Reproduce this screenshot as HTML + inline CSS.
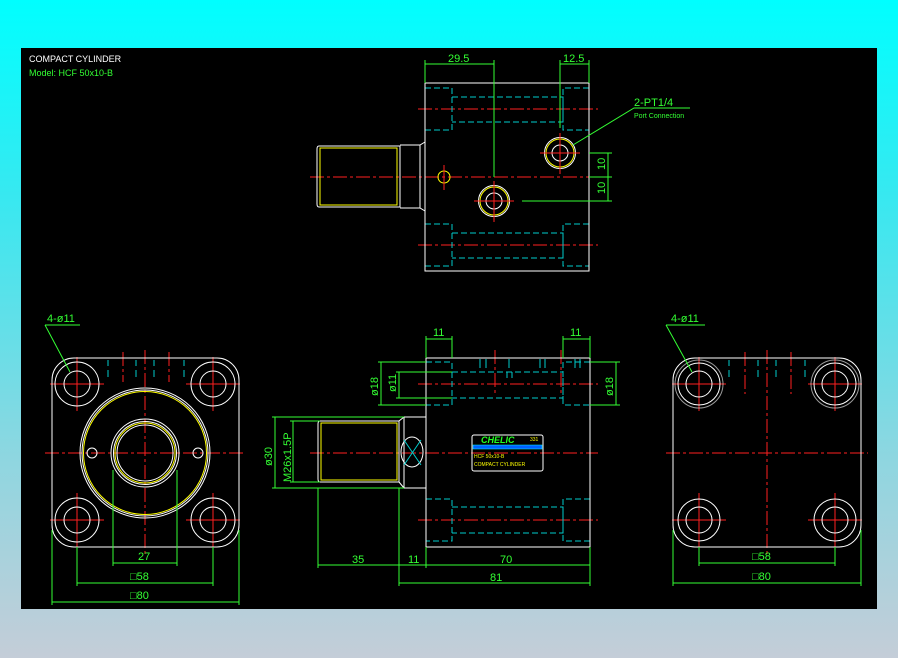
<!DOCTYPE html>
<html><head><meta charset="utf-8"><style>
html,body{margin:0;padding:0;width:898px;height:658px;overflow:hidden;background:linear-gradient(#00ffff 0%,#38e8f0 30%,#8fd6e0 70%,#c4cdd8 100%);}
svg{position:absolute;left:0;top:0}
text{font-family:"Liberation Sans",sans-serif}
</style></head><body>
<svg width="898" height="658" viewBox="0 0 898 658">
<rect x="21" y="48" width="856" height="561" fill="#000"/>
<text x="29" y="62" fill="#fff" font-size="9">COMPACT CYLINDER</text>
<text x="29" y="76" fill="#33ff33" font-size="9">Model: HCF 50x10-B</text>

<g fill="none" stroke-width="1">
<!-- ===== TOP VIEW ===== -->
<g stroke="#ff2020" stroke-dasharray="14,3,3,3">
<line x1="418" y1="109" x2="598" y2="109"/><line x1="310" y1="177" x2="598" y2="177"/><line x1="418" y1="245" x2="598" y2="245"/>
</g>
<g stroke="#00cccc" stroke-dasharray="6,3">
<path d="M425 88H452V130H425M452 97H563V122H452M589 88H563V130H589"/>
<path d="M425 224H452V266H425M452 233H563V258H452M589 224H563V266H589"/>
</g>
<g stroke="#fff">
<rect x="425" y="83" width="164" height="188"/>
<path d="M319 146H400V207H319Q317 207 317 204V149Q317 146 319 146Z"/>
<path d="M400 145H420L425 142M400 208H420L425 211M420 145V208"/>
<circle cx="494" cy="201" r="8"/><circle cx="560" cy="153" r="8"/>
</g>
<g stroke="#ffff00">
<rect x="320" y="148" width="77" height="57"/>
<circle cx="444" cy="177" r="6"/>
<circle cx="494" cy="201" r="14"/><circle cx="494" cy="201" r="15.5" stroke="#fff"/>
<circle cx="560" cy="153" r="14"/><circle cx="560" cy="153" r="15.5" stroke="#fff"/>
</g>
<g stroke="#ff2020">
<path d="M444 165V190M474 201H514M494 181V222M540 153H580M560 133V174"/>
</g>
<g stroke="#33ff33">
<path d="M425 60V83M494 60V177M425 64H494M560 60V128M589 60V83M560 64H589"/>
<path d="M589 153H612M589 177H612M522 201H612M608 153V201"/>
<path d="M573 145L634 108H690"/>
</g>
<g fill="#33ff33" font-size="11">
<text x="448" y="62" stroke="none">29.5</text>
<text x="563" y="62" stroke="none">12.5</text>
<text x="634" y="106" stroke="none">2-PT1/4</text>
<text x="634" y="118" stroke="none" font-size="7">Port Connection</text>
<text transform="translate(605,170) rotate(-90)" stroke="none">10</text>
<text transform="translate(605,194) rotate(-90)" stroke="none">10</text>
</g>

<!-- ===== LEFT VIEW ===== -->
<g stroke="#ff2020" stroke-dasharray="14,3,3,3">
<line x1="45" y1="453" x2="245" y2="453"/><line x1="145" y1="350" x2="145" y2="555"/>
<line x1="123" y1="352" x2="123" y2="382"/><line x1="169" y1="352" x2="169" y2="382"/>
</g>
<g stroke="#ff2020">
<path d="M50 384H104M77 357V411M186 384H240M213 357V411M50 520H104M77 493V547M186 520H240M213 493V547"/>
</g>
<g stroke="#fff">
<rect x="52" y="358" width="187" height="189" rx="22"/>
<circle cx="77" cy="384" r="13"/><circle cx="77" cy="384" r="22"/>
<circle cx="213" cy="384" r="13"/><circle cx="213" cy="384" r="22"/>
<circle cx="77" cy="520" r="13"/><circle cx="77" cy="520" r="22"/>
<circle cx="213" cy="520" r="13"/><circle cx="213" cy="520" r="22"/>
<circle cx="145" cy="453" r="65"/><circle cx="145" cy="453" r="63"/>
<circle cx="145" cy="453" r="34"/><circle cx="145" cy="453" r="31.5"/><circle cx="145" cy="453" r="28"/>
<circle cx="92" cy="453" r="5"/><circle cx="198" cy="453" r="5"/>
</g>
<g stroke="#ffff00"><circle cx="145" cy="453" r="61.5"/><circle cx="145" cy="453" r="30"/></g>
<g stroke="#00cccc"><path d="M108 360V366M108 370V377M136 360V366M136 370V377M154 360V366M154 370V377M184 360V366M184 370V377"/></g>
<g stroke="#33ff33">
<path d="M113 470V566M177 470V566M113 563H177M77 547V586M213 547V586M77 583H213M52 530V605M239 530V605M52 602H239"/>
<path d="M45 325H80M45 325L70 372"/>
</g>
<g fill="#33ff33" font-size="11">
<text x="138" y="560">27</text><text x="130" y="580">□58</text><text x="130" y="599">□80</text>
<text x="47" y="322">4-ø11</text>
</g>

<!-- ===== FRONT VIEW ===== -->
<g stroke="#ff2020" stroke-dasharray="14,3,3,3">
<line x1="418" y1="384" x2="598" y2="384"/><line x1="310" y1="453" x2="598" y2="453"/><line x1="418" y1="520" x2="598" y2="520"/>
<line x1="495" y1="350" x2="495" y2="395"/><line x1="561" y1="350" x2="561" y2="395"/>
</g>
<g stroke="#00cccc" stroke-dasharray="6,3">
<path d="M426 362H452V405H426M452 372H563V398H452M590 362H563V405H590"/>
<path d="M426 499H452V541H426M452 507H563V533H452M590 499H563V541H590"/>
</g>
<g stroke="#00cccc"><path d="M480 359V368M486 359V368M509 359V368M540 359V368M545 359V368M575 359V368M580 359V368M507 372V378M512 372V378"/></g>
<g stroke="#fff">
<rect x="426" y="358" width="164" height="189"/>
<path d="M320 421H399V482H320Q318 482 318 479V424Q318 421 320 421Z"/>
<path d="M399 417H426M399 488H426M404 417V488M399 421L404 417M399 482L404 488"/>
<ellipse cx="412" cy="452" rx="11" ry="15"/>
<rect x="472" y="435" width="71" height="36" rx="2"/>
</g>
<g stroke="#ffff00"><rect x="321" y="423" width="76" height="57"/></g>
<g stroke="#00cccc"><path d="M404 440L421 465M421 440L404 465"/></g>
<rect x="473" y="445" width="69" height="4" fill="#0060ff" stroke="#00ffff" stroke-width="0.5"/>
<text x="481" y="443" fill="#22ff22" font-size="9" font-weight="bold" font-style="italic">CHELIC</text>
<text x="530" y="441" fill="#ffff00" font-size="5">331</text>
<text x="474" y="458" fill="#ffff00" font-size="5">HCF 50x10-B</text>
<text x="474" y="466" fill="#ffff00" font-size="5">COMPACT CYLINDER</text>
<g stroke="#33ff33">
<path d="M426 336V358M452 336V358M426 339H452M563 336V358M590 336V358M563 339H590"/>
<path d="M378 362H426M378 405H426M381 362V405M396 372H452M396 398H452M399 372V398M590 362H620M590 405H620M616 362V405"/>
<path d="M272 417H404M272 488H404M275 417V488M290 421H320M290 482H320M293 421V482"/>
<path d="M318 488V568M399 488V586M426 547V568M590 547V586M318 565H590M399 583H590"/>
</g>
<g fill="#33ff33" font-size="11">
<text x="433" y="336">11</text><text x="570" y="336">11</text>
<text transform="translate(378,396) rotate(-90)">ø18</text>
<text transform="translate(396,392) rotate(-90)">ø11</text>
<text transform="translate(613,396) rotate(-90)">ø18</text>
<text transform="translate(272,466) rotate(-90)">ø30</text>
<text transform="translate(291,482) rotate(-90)">M26x1.5P</text>
<text x="352" y="563">35</text><text x="408" y="563">11</text><text x="500" y="563">70</text><text x="490" y="581">81</text>
</g>

<!-- ===== RIGHT VIEW ===== -->
<g stroke="#ff2020" stroke-dasharray="14,3,3,3">
<line x1="666" y1="453" x2="868" y2="453"/><line x1="767" y1="350" x2="767" y2="555"/>
<line x1="745" y1="352" x2="745" y2="394"/><line x1="791" y1="352" x2="791" y2="394"/>
</g>
<g stroke="#ff2020">
<path d="M672 384H726M699 357V411M808 384H862M835 357V411M672 520H726M699 493V547M808 520H862M835 493V547"/>
</g>
<g stroke="#fff">
<rect x="673" y="358" width="188" height="189" rx="22"/>
<circle cx="699" cy="384" r="13"/><circle cx="699" cy="384" r="21"/><circle cx="699" cy="384" r="24" stroke-opacity="0.6"/>
<circle cx="835" cy="384" r="13"/><circle cx="835" cy="384" r="21"/><circle cx="835" cy="384" r="24" stroke-opacity="0.6"/>
<circle cx="699" cy="520" r="13"/><circle cx="699" cy="520" r="21"/>
<circle cx="835" cy="520" r="13"/><circle cx="835" cy="520" r="21"/>
</g>
<g stroke="#00cccc"><path d="M729 360V366M729 370V377M758 360V366M758 370V377M776 360V366M776 370V377M805 360V366M805 370V377"/></g>
<g stroke="#33ff33">
<path d="M699 547V566M835 547V566M699 563H835M673 530V586M861 530V586M673 583H861"/>
<path d="M666 325H705M666 325L692 372"/>
</g>
<g fill="#33ff33" font-size="11">
<text x="752" y="560">□58</text><text x="752" y="580">□80</text><text x="671" y="322">4-ø11</text>
</g>
</g>
</svg>
</body></html>
